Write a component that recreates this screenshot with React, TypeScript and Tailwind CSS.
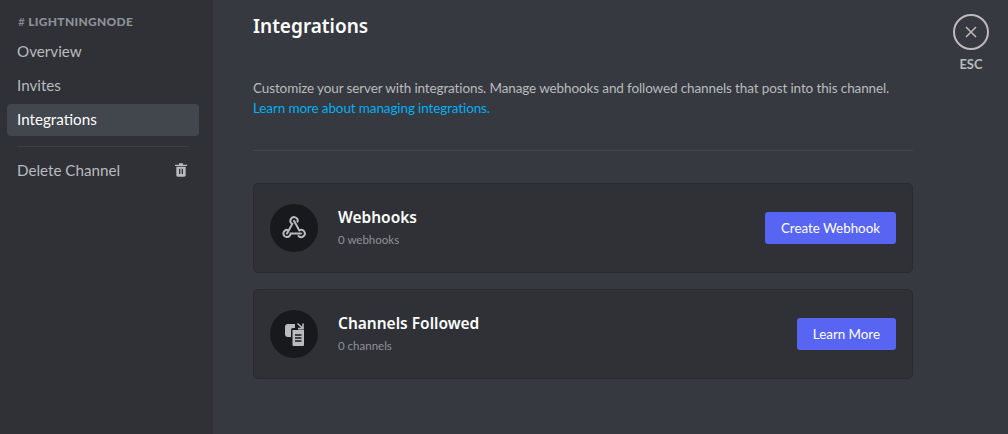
import React from "react";

const font = { fontFamily: '"Lato", "Noto Sans", sans-serif' };
const noto = { fontFamily: '"Noto Sans", sans-serif' };

function WebhookIcon() {
  return (
    <svg width="24" height="24" viewBox="0 0 24 24" fill="none" stroke="#b9bbbe" strokeWidth="2" strokeLinecap="round">
      <path d="M5 17.5 L10.3 7.9 A3.6 3.6 0 1 1 15.5 5.7" />
      <path d="M12 4.8 L17.3 14.4 A3.6 3.6 0 1 1 16.6 20" />
      <path d="M19 17.5 H8.6 A3.6 3.6 0 1 1 5.4 13.9" />
    </svg>
  );
}

function FollowIcon() {
  return (
    <svg width="24" height="24" viewBox="0 0 24 24" fill="none">
      <path d="M3 5 a3 3 0 0 1 3-3 h7 v4 h-2 a2 2 0 0 0-2 2 v7 H6 a3 3 0 0 1-3-3 Z" fill="#b9bbbe" />
      <path d="M10.5 8 h11.5 v15 a1 1 0 0 1-1 1 h-9.5 a1 1 0 0 1-1-1 Z" fill="#b9bbbe" />
      <path d="M13 13 h6.5 M13 16 h6.5 M13 19 h6.5" stroke="#18191c" strokeWidth="1.3" />
      <path d="M15.5 1.5 L20.5 6 M21 1.5 V6.6 H16" stroke="#b9bbbe" strokeWidth="1.6" />
    </svg>
  );
}

function Card({ icon, title, sub, action }: { icon: React.ReactNode; title: string; sub: string; action: string }) {
  return (
    <div className="flex h-[90px] items-center rounded-[5px] border border-[#292b2f] bg-[#2f3136] pl-4 pr-4">
      <div className="flex h-12 w-12 shrink-0 items-center justify-center rounded-full bg-[#18191c]">{icon}</div>
      <div className="ml-5 flex-1 pb-px">
        <div className="text-[15.5px] leading-5 font-semibold text-white" style={noto}>{title}</div>
        <div className="mt-[5px] text-[11.5px] leading-4 text-[#8e9297]">{sub}</div>
      </div>
      <button className="h-8 rounded-[3px] bg-[#5865f2] px-4 text-[13.35px] text-white">{action}</button>
    </div>
  );
}

function NavItem({ label, active }: { label: string; active?: boolean }) {
  return (
    <div className={`flex h-8 items-center rounded-[4px] px-[10px] pb-[2px] text-[15.2px] ${active ? "bg-[#42464d] text-white" : "text-[#b9bbbe]"}`}>
      {label}
    </div>
  );
}

export default function App() {
  return (
    <div className="flex h-[434px] w-[1008px] overflow-hidden bg-[#36393f]" style={font}>
      <aside className="w-[213px] shrink-0 bg-[#2f3136] pl-[7px] pr-[14px] pt-[14px]">
        <div className="flex h-[15px] items-center px-[11px] text-[12px] font-black tracking-[0.3px] text-[#8e9297] uppercase">
          <span className="mr-[3px] font-normal">#</span>LightningNode
        </div>
        <div className="mt-[7px] flex flex-col gap-[2px]">
          <NavItem label="Overview" />
          <NavItem label="Invites" />
          <NavItem label="Integrations" active />
        </div>
        <div className="mx-[10px] mb-[7px] mt-[10px] h-px bg-[#3b3e44]" />
        <div className="flex h-8 items-center justify-between px-[10px] text-[15.2px] text-[#b9bbbe]">
          <span>Delete Channel</span>
          <svg width="16" height="16" viewBox="0 0 24 24" fill="#b9bbbe">
            <path d="M15 3.999V2H9v1.999H3V6h18V3.999h-6Z" />
            <path fillRule="evenodd" d="M5 6.999v13C5 21.102 5.897 22 7 22h10c1.103 0 2-.898 2-2.001v-13H5Zm6 11H9v-8h2v8Zm4 0h-2v-8h2v8Z" />
          </svg>
        </div>
      </aside>
      <main className="flex flex-1 pl-10">
        <div className="w-[660px] shrink-0">
          <h1 className="mt-[14px] text-[19px] leading-6 font-semibold text-white" style={noto}>Integrations</h1>
          <p className="mt-[40px] text-[13.5px] leading-5 tracking-[-0.12px] text-[#b9bbbe]">
            Customize your server with integrations. Manage webhooks and followed channels that post into this channel.
            <br />
            <span className="text-[#00aff4]">Learn more about managing integrations.</span>
          </p>
          <div className="mt-[32px] h-px bg-[#42454a]" />
          <div className="mt-[32px] flex flex-col gap-4">
            <Card icon={<WebhookIcon />} title="Webhooks" sub="0 webhooks" action="Create Webhook" />
            <Card icon={<FollowIcon />} title="Channels Followed" sub="0 channels" action="Learn More" />
          </div>
        </div>
        <div className="ml-10 flex w-9 flex-col items-center pt-[14px]">
          <div className="flex h-9 w-9 items-center justify-center rounded-full border-2 border-[#b9bbbe]">
            <svg width="18" height="18" viewBox="0 0 18 18" stroke="#b9bbbe" strokeWidth="1.5" fill="none">
              <path d="M4 4 L14 14 M14 4 L4 14" />
            </svg>
          </div>
          <div className="mt-[6px] text-[13px] leading-4 font-bold text-[#b9bbbe]">ESC</div>
        </div>
      </main>
    </div>
  );
}
